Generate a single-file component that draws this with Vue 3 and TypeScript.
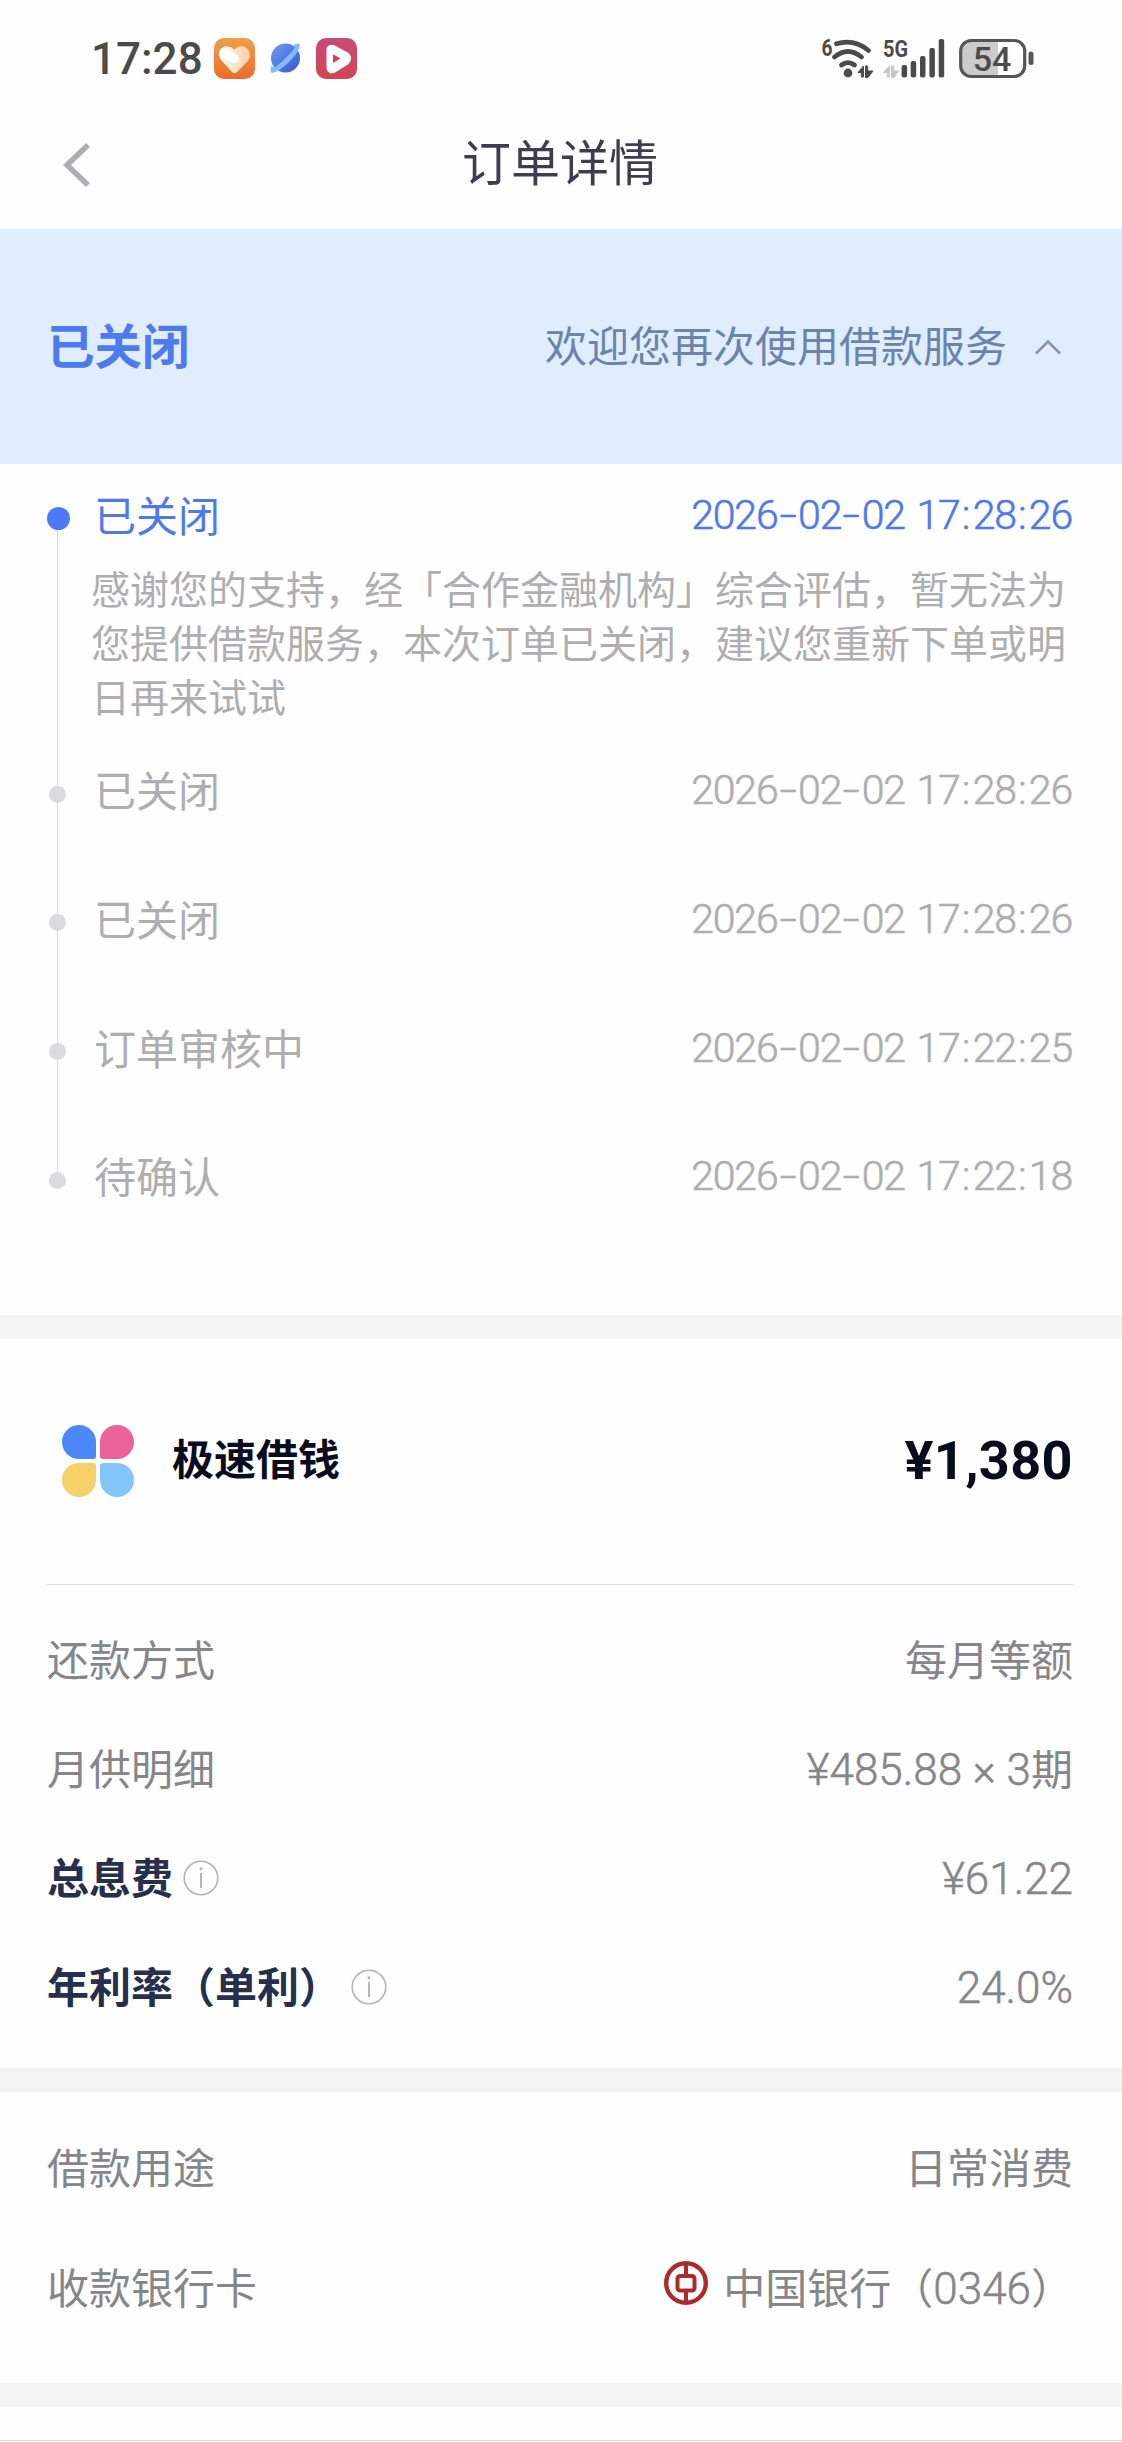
<script setup lang="ts">
interface Step {
  label: string
  time: string
  note?: string
}

interface Row {
  label: string
  value: string
  strong?: boolean
}

const steps: Step[] = [
  {
    label: '已关闭',
    time: '2026-02-02 17:28:26',
    note: '感谢您的支持，经「合作金融机构」综合评估，暂无法为您提供借款服务，本次订单已关闭，建议您重新下单或明日再来试试',
  },
  { label: '已关闭', time: '2026-02-02 17:28:26' },
  { label: '已关闭', time: '2026-02-02 17:28:26' },
  { label: '订单审核中', time: '2026-02-02 17:22:25' },
  { label: '待确认', time: '2026-02-02 17:22:18' },
]

const rows: Row[] = [
  { label: '还款方式', value: '每月等额' },
  { label: '月供明细', value: '¥485.88 × 3期' },
  { label: '总息费', value: '¥61.22', strong: true },
  { label: '年利率（单利）', value: '24.0%', strong: true },
]

const bars = [
  { x: 18.6, y: 27 },
  { x: 27.7, y: 23 },
  { x: 37, y: 18 },
  { x: 46.4, y: 10 },
  { x: 55.7, y: 1 },
]

// Separators get their own boxes so that they can be wider than the digits' rhythm.
const splitTime = (time: string): string[] => time.match(/[-: ]|\d+/g) ?? []
const partClass = (part: string): string =>
  part === '-' ? 'dash' : part === ':' ? 'colon' : part === ' ' ? 'gap' : 'digits'

// Latin runs are set slightly larger than the Chinese characters beside them.
const splitValue = (value: string): string[] => value.match(/[\u4e00-\u9fff（）]+|[^\u4e00-\u9fff（）]+/g) ?? []
const isLatin = (part: string): boolean => !/[\u4e00-\u9fff（）]/.test(part)
</script>

<template>
  <div class="page">
    <div class="status-bar">
      <span class="clock">17:28</span>
      <svg class="app-icon heart" viewBox="0 0 41 41">
        <defs>
          <linearGradient id="orange" x1="0" y1="0" x2="0" y2="1">
            <stop offset="0" stop-color="#eda048" />
            <stop offset="1" stop-color="#ee6a2b" />
          </linearGradient>
          <linearGradient id="cream" x1="0" y1="0" x2="1" y2="0">
            <stop offset="0" stop-color="#fffaf5" />
            <stop offset="1" stop-color="#fbd0a6" />
          </linearGradient>
        </defs>
        <rect width="41" height="41" rx="10" fill="url(#orange)" />
        <path d="M20.500 12 C23 8 29 7 33 10.500 C37 14.500 36.500 20 33.500 23.500 L23 34 Q20.500 36.500 18 34 L7.500 22.500 C4 18.500 4 14 7 10.500 C11 7 17 8 20.500 12Z" fill="url(#cream)" />
        <path d="M10 14.500 L20.500 20.500" stroke="#fff" stroke-width="9" stroke-linecap="round" />
      </svg>
      <svg class="app-icon planet" viewBox="0 0 41 41">
        <defs>
          <linearGradient id="globe" x1="0" y1="0" x2="1" y2="1">
            <stop offset="0" stop-color="#6c9cf5" />
            <stop offset="1" stop-color="#3a55cf" />
          </linearGradient>
        </defs>
        <circle cx="20.500" cy="20" r="14.500" fill="url(#globe)" />
        <path d="M28 7.200 Q35 3.500 35 7.500 Q34 14 24 24 Q12 35 7 34.900 Q4 34 7 26.500 C7.500 31 10 30.500 20 20.500 C31 10 31 8.500 28 7.200Z" fill="#82bdf9" />
      </svg>
      <svg class="app-icon play" viewBox="0 0 41 41">
        <defs>
          <linearGradient id="berry" x1="0" y1="0" x2="0" y2="1">
            <stop offset="0" stop-color="#c94a7a" />
            <stop offset="1" stop-color="#d04650" />
          </linearGradient>
        </defs>
        <rect width="41" height="41" rx="10" fill="url(#berry)" />
        <path d="M14 11 Q15 9.500 18 11 L30 17.500 Q33 20.500 30 23.500 L18 31 Q14 33 14 29Z" fill="#fff" stroke="#fff" stroke-width="7" stroke-linejoin="round" />
        <path d="M17 16.200 L24.500 20.500 L17 25Z" fill="#c9415f" />
      </svg>

      <svg class="wifi" viewBox="0 0 54 42" fill="none">
        <text x="0.500" y="17.500" class="tiny" textLength="11" lengthAdjust="spacingAndGlyphs">6</text>
        <g stroke="#4b4b4b" stroke-width="4.800" stroke-linecap="round">
          <path d="M15.500 5.800 Q33 0.500 47.500 12.500" />
          <path d="M13.500 19 Q27 8 40.500 19" />
          <path d="M20.500 27 Q27 22.300 33.500 27" />
        </g>
        <circle cx="27" cy="35" r="4.400" fill="#4b4b4b" />
        <path d="M37 34.500 L42.500 28 V39 H40.300 V34.500Z M44.500 28 H46.700 V33 H52 L47 39.500 H44.500Z" fill="#4b4b4b" stroke="#4b4b4b" stroke-width="1" />
      </svg>
      <svg class="cell" viewBox="0 0 62 42">
        <text x="0" y="19" class="tiny" textLength="25" lengthAdjust="spacingAndGlyphs">5G</text>
        <path d="M0.500 34.500 L6.300 28 V39 H4.300 V34.500Z M8.500 28 H10.700 V33 H15.500 L11 39.500 H8.500Z" fill="#c6c6c6" stroke="#c6c6c6" stroke-width="1" />
        <rect v-for="bar in bars" :key="bar.x" :x="bar.x" :y="bar.y" width="5.500" :height="39.500 - bar.y" rx="2" fill="#4b4b4b" />
      </svg>
      <svg class="battery" viewBox="0 0 76 42">
        <path d="M13 3 H39 V37 H13 Q3 37 3 27 V13 Q3 3 13 3Z" fill="#cbcbcb" />
        <rect x="1.700" y="2.500" width="64" height="36" rx="10.500" fill="none" stroke="#565656" stroke-width="3.200" />
        <rect x="69.500" y="13.500" width="5" height="13.500" rx="2.500" fill="#565656" />
        <text x="33" y="32.500" text-anchor="middle" class="charge">54</text>
      </svg>
    </div>

    <header class="nav">
      <svg class="back" viewBox="0 0 30 48">
        <path d="M26 4 L5 24 L26 44" fill="none" stroke="#adaeb0" stroke-width="5.500" />
      </svg>
      <h1>订单详情</h1>
    </header>

    <section class="banner">
      <strong>已关闭</strong>
      <span class="welcome">欢迎您再次使用借款服务</span>
      <svg class="fold" viewBox="0 0 28 18">
        <path d="M2 15.500 L14 3.500 L26 15.500" fill="none" stroke="#8793a6" stroke-width="2.600" />
      </svg>
    </section>

    <section class="timeline">
      <div v-for="(step, i) in steps" :key="i" class="step" :class="{ active: i === 0 }">
        <div class="rail"><i class="dot"></i></div>
        <div class="body">
          <div class="head">
            <span class="label">{{ step.label }}</span>
            <time class="num"><span v-for="(part, j) in splitTime(step.time)" :key="j" :class="partClass(part)">{{ part }}</span></time>
          </div>
          <p v-if="step.note">{{ step.note }}</p>
        </div>
      </div>
    </section>

    <section class="product">
      <div class="product-head">
        <svg class="flower" viewBox="0 0 72 72">
          <path d="M34 17 V31 Q34 34 31 34 H17 A17 17 0 1 1 34 17Z" fill="#4d87f8" />
          <path d="M38 17 V31 Q38 34 41 34 H55 A17 17 0 1 0 38 17Z" fill="#ed6199" />
          <path d="M34 55 V41 Q34 38 31 38 H17 A17 17 0 1 0 34 55Z" fill="#f6d168" />
          <path d="M38 55 V41 Q38 38 41 38 H55 A17 17 0 1 1 38 55Z" fill="#84c6fb" />
        </svg>
        <strong class="name">极速借钱</strong>
        <strong class="amount">¥1,380</strong>
      </div>
      <div class="rows">
        <div v-for="row in rows" :key="row.label" class="row">
          <span :class="{ strong: row.strong }">{{ row.label }}</span>
          <svg v-if="row.strong" class="info" viewBox="0 0 36 36">
            <circle cx="18" cy="18" r="16.800" fill="none" stroke="#b4b4b6" stroke-width="1.600" />
            <circle cx="18" cy="8.700" r="1.500" fill="#b4b4b6" />
            <path d="M18 13 V28" stroke="#b4b4b6" stroke-width="2" />
          </svg>
          <span class="value"><span v-for="(part, j) in splitValue(row.value)" :key="j" :class="{ latin: isLatin(part) }">{{ part }}</span></span>
        </div>
      </div>
    </section>

    <section class="usage">
      <div class="row">
        <span>借款用途</span>
        <span class="value">日常消费</span>
      </div>
      <div class="row">
        <span>收款银行卡</span>
        <span class="value bank">
          <svg viewBox="0 0 44 44" fill="none" stroke="#ad2a2c">
            <circle cx="22" cy="22" r="19.800" stroke-width="4.400" />
            <rect x="13.500" y="15" width="17" height="14.500" rx="2.500" stroke-width="4" />
            <path d="M22 3 V14 M22 30 V41" stroke-width="4" />
          </svg>
          <span><span v-for="(part, j) in splitValue('中国银行（0346）')" :key="j" :class="{ latin: isLatin(part) }">{{ part }}</span></span>
        </span>
      </div>
    </section>

    <div class="next"></div>
  </div>
</template>

<style>
body {
  background: #fefefe;
}
</style>

<style scoped>
.page {
  width: 1122px;
  height: 2442px;
  overflow: hidden;
  display: flex;
  flex-direction: column;
  background: #fefefe;
  color: #85868a;
  font-family: "Noto Sans CJK SC", sans-serif;
  font-size: 42px;
  white-space: nowrap;
}

.page > * {
  flex: none;
  box-sizing: border-box;
}

svg {
  overflow: visible;
}

.num {
  font-family: Roboto, "Noto Sans CJK SC", sans-serif;
}

.latin {
  font-family: Roboto, sans-serif;
  font-size: 44px;
  font-weight: 300;
  line-height: 1;
  white-space: pre;
  -webkit-text-stroke: 0.500px currentColor;
}

.status-bar {
  height: 98px;
  padding: 19px 87px 0 91px;
  display: flex;
  align-items: center;
}

.clock {
  width: 123px;
  font: 500 44px/50px Roboto, sans-serif;
  color: #4b4b4b;
}

.app-icon {
  width: 41px;
  height: 41px;
  margin-right: 10px;
}

.wifi {
  width: 54px;
  height: 42px;
  margin-left: auto;
}

.cell {
  width: 62px;
  height: 42px;
  margin-left: 8px;
}

.battery {
  width: 76px;
  height: 42px;
  margin-left: 14px;
}

.tiny {
  font: 700 24px Roboto, sans-serif;
  fill: #4b4b4b;
}

.charge {
  font: 500 34px Roboto, sans-serif;
  fill: #4b4b4b;
}

.nav {
  height: 131px;
  padding: 0 62px;
  display: flex;
  align-items: center;
}

.back {
  width: 30px;
  height: 48px;
  margin-top: 2px;
}

h1 {
  flex: 1;
  margin: 0 32px 7px 0;
  text-align: center;
  font-size: 49px;
  font-weight: 400;
  line-height: 70px;
  color: #3c3e50;
}

.banner {
  height: 235px;
  padding: 0 60px 0 47px;
  display: flex;
  align-items: center;
  background: #e0edfe;
}

.banner strong {
  font-size: 47.500px;
  color: #4e7af0;
  line-height: 70px;
  padding-bottom: 6px;
}

.welcome {
  margin-left: auto;
  color: #6b84ad;
  line-height: 60px;
  padding-bottom: 5px;
}

.fold {
  width: 28px;
  height: 18px;
  margin-left: 27px;
}

.timeline {
  height: 851px;
  padding: 22px 50px 0 45px;
}

.step {
  display: flex;
  height: 128.700px;
  color: #aeaeb0;
}

.step.active {
  height: 275.800px;
}

.rail {
  flex: none;
  width: 25px;
  position: relative;
  display: flex;
  justify-content: center;
  align-items: flex-start;
}

.step:not(:last-child) .rail::before {
  content: "";
  position: absolute;
  left: 12px;
  top: 32px;
  bottom: -32px;
  width: 1px;
  background: #d9d9dc;
}

.dot {
  position: relative;
  width: 17px;
  height: 17px;
  margin-top: 24px;
  border-radius: 50%;
  background: #dbdbde;
}

.active .dot {
  width: 23px;
  height: 23px;
  margin: 21px -1px 0 1px;
  background: #4d79f6;
}

.body {
  flex: 1;
  padding-left: 24px;
}

.head {
  height: 60px;
  display: flex;
  align-items: center;
  justify-content: space-between;
}

.active .head {
  color: #4f78ea;
}

.label {
  line-height: 60px;
  margin-bottom: 5px;
}

time {
  font-size: 41px;
  font-weight: 300;
  line-height: 60px;
  margin-bottom: 3px;
  display: flex;
  -webkit-text-stroke: 0.600px currentColor;
}

.digits {
  letter-spacing: -1.150px;
}

.dash,
.colon,
.gap {
  text-align: center;
  white-space: pre;
}

.dash {
  width: 20.500px;
  transform: scaleX(1.500);
}

.colon {
  width: 13px;
}

.gap {
  width: 11.500px;
}

p {
  width: 976px;
  margin: 14px 0 0 -3px;
  font-size: 39px;
  line-height: 54px;
  white-space: normal;
}

.product {
  height: 777px;
  padding: 0 49px 0 47px;
  border-top: 24px solid #f3f5f5;
  border-bottom: 24px solid #f3f5f5;
}

.product-head {
  height: 246px;
  box-sizing: border-box;
  padding: 0 0 1px 15px;
  display: flex;
  align-items: center;
  color: #080c1c;
  border-bottom: 1px solid #d9dadd;
}

.flower {
  width: 72px;
  height: 72px;
}

.name {
  margin: 0 auto 0 38px;
  line-height: 60px;
  padding-bottom: 8px;
}

.amount {
  font: 700 54px/64px Roboto, sans-serif;
  letter-spacing: 0.400px;
  padding-bottom: 1px;
}

.rows {
  padding-top: 21px;
}

.row {
  height: 108.800px;
  display: flex;
  align-items: center;
  line-height: 60px;
}

.row > span {
  padding-bottom: 4px;
}

.strong {
  font-weight: 700;
  color: #262f4b;
}

.info {
  width: 36px;
  height: 36px;
  margin-left: 10px;
}

.value {
  margin-left: auto;
}

.usage {
  height: 315px;
  padding: 16px 49px 0 47px;
  border-bottom: 24px solid #f3f5f5;
}

.usage .row {
  height: 120px;
}

.bank {
  display: flex;
  align-items: center;
}

.bank svg {
  width: 44px;
  height: 44px;
  margin: 0 15px 6px 0;
}

.next {
  height: 34px;
  border-bottom: 1px solid #d6d8d8;
}
</style>
